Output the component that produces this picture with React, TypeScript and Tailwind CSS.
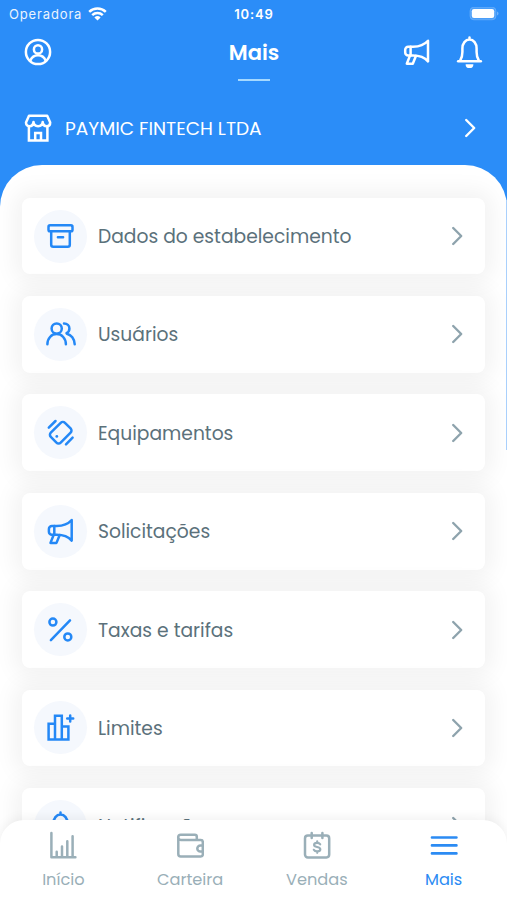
import type { ReactNode } from "react";

type IconProps = { size?: number; className?: string; children?: ReactNode };

function Icon({ size = 30, className, children }: IconProps) {
  return (
    <svg
      width={size}
      height={size}
      viewBox={`0 0 ${size} ${size}`}
      fill="none"
      stroke="currentColor"
      strokeWidth={2.5}
      strokeLinecap="round"
      strokeLinejoin="round"
      className={className}
    >
      {children}
    </svg>
  );
}

function MegaphoneShape() {
  return (
    <>
      <path d="M25 2.8C21.5 6.8 16 8.7 10 8.7H5.2a3 3 0 0 0-3 3v2.9a3 3 0 0 0 3 3H10c6 0 11.5 1.8 15 5.8Z" />
      <path d="M7.6 8.7v8.9M7 17.6 3.8 25.7h6l3.2-7.9" />
    </>
  );
}

function BellShape() {
  return (
    <>
      <path d="M14.5 1.6v2M5.4 24c1.4-2.4 2-4.8 2-8v-3.4c0-5.3 3-9 7.1-9s7.1 3.7 7.1 9V16c0 3.2.6 5.6 2 8" />
      <path d="M3.2 25.2h22.6" strokeWidth={2.6} />
      <path d="M10.6 28.2h7.8a3.9 3.9 0 0 1-7.8 0Z" fill="currentColor" stroke="none" />
    </>
  );
}

function Chevron({ className }: { className?: string }) {
  return (
    <svg width="14" height="22" viewBox="0 0 14 22" fill="none" stroke="currentColor" strokeWidth={2.4} strokeLinecap="round" strokeLinejoin="round" className={className}>
      <path d="m3.2 3 8 8-8 8" />
    </svg>
  );
}

const menu = [
  {
    label: "Dados do estabelecimento",
    icon: (
      <>
        <rect x="2.5" y="4.3" width="24" height="6" rx="1.6" />
        <path d="M5.2 10.4v13.3a2 2 0 0 0 2 2h14.6a2 2 0 0 0 2-2V10.4M11.9 16.3h5.2" />
      </>
    ),
  },
  {
    label: "Usuários",
    icon: (
      <>
        <circle cx="10.7" cy="9.6" r="5.1" />
        <path d="M1.4 25.3c0-5.9 4-10.2 9.2-10.2s9.3 4.3 9.3 10.2" />
        <path d="M18 4.5c3.2 0 5.4 2.1 5.4 5 0 2.1-1 3.8-2.9 4.7M20.9 14.7c4.2 1 7.6 5.2 7.8 10.6" />
      </>
    ),
  },
  {
    label: "Equipamentos",
    icon: (
      <>
        <rect x="-7" y="-10" width="14" height="20" rx="3" transform="translate(14.7 14.7) rotate(45)" />
        <path d="m2.8 9.7 6.7-6.7M20 26.3l6.6-6.6" />
        <circle cx="10.8" cy="18.4" r="1.4" fill="currentColor" stroke="none" />
      </>
    ),
  },
  {
    label: "Solicitações",
    icon: (
      <g transform="translate(.7 1.2)">
        <MegaphoneShape />
      </g>
    ),
  },
  {
    label: "Taxas e tarifas",
    icon: (
      <>
        <circle cx="6.9" cy="7.1" r="3.5" />
        <circle cx="21.8" cy="21.9" r="3.5" />
        <path d="M4.9 25.1 24 5.4" />
      </>
    ),
  },
  {
    label: "Limites",
    icon: (
      <g strokeLinejoin="miter">
        <path d="M9 26.5H2.6V10.8H9M9 26.5V2.8h6.8v23.7ZM15.8 13.6h6.6v12.9h-6.6" />
        <path d="M24.2 2.6v6M21.2 5.6h6" />
      </g>
    ),
  },
  { label: "Notificações", icon: <BellShape /> },
];

const tabs = [
  {
    label: "Início",
    icon: <path d="M2.4 2v24.2h24M7.7 20.8v5M13 15.6v10.2M18.3 10.3v15.5M23.6 5.2v20.6" />,
  },
  {
    label: "Carteira",
    icon: (
      <>
        <path d="M20.8 8.8V5.7a2 2 0 0 0-2-2H4.8a2.6 2.6 0 0 0 0 5.2h20a2 2 0 0 1 2 2v12.5a2 2 0 0 1-2 2H4.8a2.5 2.5 0 0 1-2.5-2.5V6" />
        <path d="M26.8 14.4H24.4a3.1 3.1 0 0 0 0 6.2h2.4" />
      </>
    ),
  },
  {
    label: "Vendas",
    icon: (
      <>
        <rect x="2" y="4.6" width="24.2" height="21.8" rx="2.8" />
        <path d="M8.7 2v5M19.4 2v5" />
        <path d="M17.2 13.3c-.6-1-1.7-1.4-3.1-1.4-1.8 0-3 .8-3 2.1 0 2.9 6.2 1.1 6.2 4.2 0 1.4-1.3 2.2-3.1 2.2-1.6 0-2.8-.5-3.4-1.6M14.2 10.4v1.5M14.2 20.4v1.4" strokeWidth={2.2} />
      </>
    ),
  },
  {
    label: "Mais",
    active: true,
    icon: <path d="M2 6.5h24.4M2 14.4h24.4M2 22.4h24.4" strokeWidth={2.7} />,
  },
];

function StatusBar() {
  return (
    <div className="grid h-7 grid-cols-3 items-center pr-2 pl-[9px] font-[Inter,sans-serif] text-[13px]">
      <div className="flex items-center gap-1.5">
        <span className="pt-px tracking-[0.85px] opacity-90">Operadora</span>
        <svg width="19" height="15" viewBox="0 0 19 15" fill="none" stroke="currentColor" strokeWidth={2.5}>
          <path d="M1.2 4.8a12 12 0 0 1 16.6 0M4.2 8.2a7.7 7.7 0 0 1 10.6 0" />
          <path d="M9.5 13.5 6.4 10.4a4.5 4.5 0 0 1 6.2 0Z" fill="currentColor" stroke="none" />
        </svg>
      </div>
      <span className="pt-px text-center font-semibold tracking-[0.9px]">10:49</span>
      <svg width="30" height="15" viewBox="0 0 30 15" className="justify-self-end">
        <rect x="1" y=".2" width="26" height="12.6" rx="3.8" fill="white" fillOpacity=".15" stroke="white" strokeOpacity=".2" />
        <rect x="2.8" y="2" width="22.4" height="9" rx="2.2" fill="white" />
        <path d="M28.2 4.5c1.7.8 1.7 3.2 0 4Z" fill="white" fillOpacity=".4" />
      </svg>
    </div>
  );
}

export default function App() {
  return (
    <div className="relative flex h-[900px] w-[507px] flex-col overflow-hidden bg-white font-[Poppins,Inter,sans-serif]">
      <header className="-mb-[45px] h-[210px] shrink-0 bg-[#2b8df8] text-white">
        <StatusBar />
        <div className="grid h-12 grid-cols-3 items-center pr-[23px] pl-6">
          <Icon size={28}>
            <circle cx="14" cy="14" r="12.1" />
            <circle cx="14" cy="11.4" r="4.1" />
            <path d="M6.3 22.7c1.4-3.5 4.2-5.4 7.7-5.4s6.3 1.9 7.7 5.4" />
          </Icon>
          <h1 className="pt-px text-center text-[21px] font-semibold">Mais</h1>
          <div className="flex items-center justify-end gap-6">
            <Icon size={28}>
              <MegaphoneShape />
            </Icon>
            <svg width="29" height="34" viewBox="0 0 29 34" fill="none" stroke="currentColor" strokeWidth={2.5} strokeLinecap="round" strokeLinejoin="round">
              <g transform="translate(0 1)">
                <BellShape />
              </g>
            </svg>
          </div>
        </div>
        <div className="mx-auto mt-[3px] h-[2px] w-8 bg-[#a5d9ff]" />
        <button className="mt-[27px] flex h-10 w-full items-center pr-[30px] pl-6 text-left">
          <Icon size={28}>
            <path d="M5 1.8h18.2l3 6.7c0 2.2-1.2 3.7-3.2 3.7-2.4 0-4.2-1.7-4.3-4.3-.2 2.6-2 4.3-4.6 4.3s-4.4-1.7-4.6-4.3c-.1 2.6-1.9 4.3-4.3 4.3-2 0-3.2-1.5-3.2-3.7Z" />
            <path d="M4.9 12.5v14h18.5v-14M11.2 26.2V19h5.8v7.2" strokeLinejoin="miter" />
          </Icon>
          <span className="ml-[13px] flex-1 pt-px text-[18.6px] whitespace-nowrap">PAYMIC FINTECH LTDA</span>
          <Chevron />
        </button>
      </header>

      <main className="flex flex-1 flex-col gap-[21.7px] overflow-hidden rounded-t-[42px] bg-white px-[22px] pt-[32.7px]">
        {menu.map((item) => (
          <button
            key={item.label}
            className="flex h-[76.7px] shrink-0 items-center rounded-[8px] bg-white pr-[21px] pl-3 text-left text-[#5b717b] shadow-[0_0_22px_8px_rgba(0,0,0,0.05)]"
          >
            <span className="flex size-[53px] items-center justify-center rounded-full bg-[#f5f8fd] text-[#2488f6]">
              <Icon>{item.icon}</Icon>
            </span>
            <span className="ml-[11px] flex-1 pt-[2px] text-[18.7px] whitespace-nowrap">{item.label}</span>
            <Chevron className="text-[#8ea3ad]" />
          </button>
        ))}
      </main>

      {/* scroll indicator */}
      <div className="absolute top-[200px] right-0 h-[250px] w-px bg-[#a9d0fc]" />

      <nav className="absolute inset-x-0 bottom-0 grid h-20 grid-cols-4 rounded-t-[24px] bg-white shadow-[0_-2px_12px_rgba(0,0,0,0.06)]">
        {tabs.map((tab) => (
          <button
            key={tab.label}
            className={`flex flex-col items-center pt-[11px] ${tab.active ? "text-[#2b8bf3]" : "text-[#9aafb8]"}`}
          >
            <Icon size={28}>{tab.icon}</Icon>
            <span className="mt-[9px] text-[16.2px] leading-6">{tab.label}</span>
          </button>
        ))}
      </nav>
    </div>
  );
}
